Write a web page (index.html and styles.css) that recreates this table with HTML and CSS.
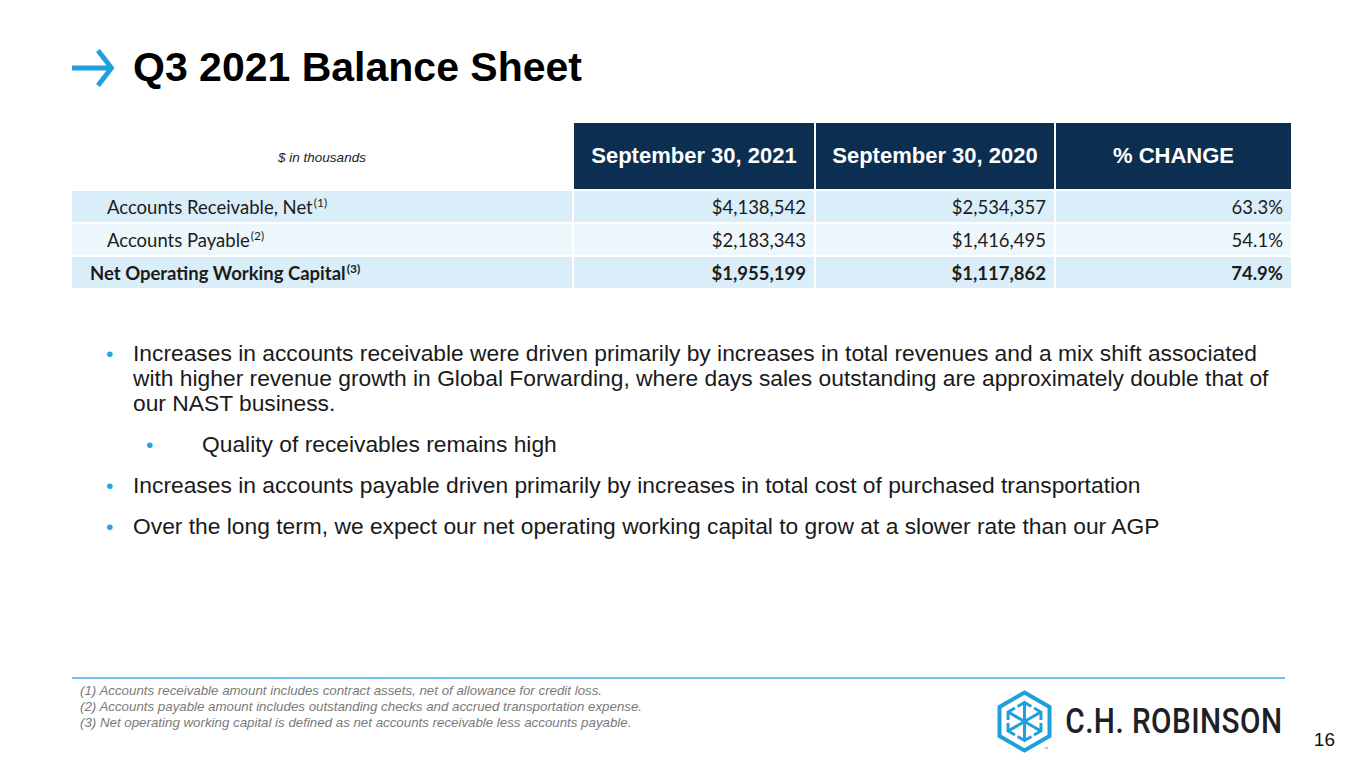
FILE: index.html
```html
<!DOCTYPE html>
<html lang="en">
<head>
<meta charset="utf-8">
<title>Q3 2021 Balance Sheet</title>
<link rel="stylesheet" href="styles.css">
</head>
<body>
<div class="slide">
  <header class="title-row">
    <svg class="title-arrow" width="42" height="38" viewBox="0 0 42 38" aria-hidden="true">
      <path d="M0 19 H38" />
      <path d="M26 1.5 L39.5 19 L26 36.5" />
    </svg>
    <h1 class="title">Q3 2021 Balance Sheet</h1>
  </header>

  <div class="table">
    <div class="cell head-note">$ in thousands</div>
    <div class="cell head">September 30, 2021</div>
    <div class="cell head">September 30, 2020</div>
    <div class="cell head">% CHANGE</div>

    <div class="cell label row-a">Accounts Receivable, Net<sup>(1)</sup></div>
    <div class="cell num row-a">$4,138,542</div>
    <div class="cell num row-a">$2,534,357</div>
    <div class="cell num row-a">63.3%</div>

    <div class="cell label row-b">Accounts Payable<sup>(2)</sup></div>
    <div class="cell num row-b">$2,183,343</div>
    <div class="cell num row-b">$1,416,495</div>
    <div class="cell num row-b">54.1%</div>

    <div class="cell label total row-a">Net Operating Working Capital<sup>(3)</sup></div>
    <div class="cell num total row-a">$1,955,199</div>
    <div class="cell num total row-a">$1,117,862</div>
    <div class="cell num total row-a">74.9%</div>
  </div>

  <ul class="bullets">
    <li class="item"><span class="dot">•</span><span class="text">Increases in accounts receivable were driven primarily by increases in total revenues and a mix shift associated with higher revenue growth in Global Forwarding, where days sales outstanding are approximately double that of our NAST business.</span></li>
    <li class="item sub"><span class="dot">•</span><span class="text">Quality of receivables remains high</span></li>
    <li class="item"><span class="dot">•</span><span class="text">Increases in accounts payable driven primarily by increases in total cost of purchased transportation</span></li>
    <li class="item"><span class="dot">•</span><span class="text">Over the long term, we expect our net operating working capital to grow at a slower rate than our AGP</span></li>
  </ul>

  <footer class="footer">
    <div class="rule"></div>
    <div class="footer-row">
      <div class="notes">
        <p>(1) Accounts receivable amount includes contract assets, net of allowance for credit loss.</p>
        <p>(2) Accounts payable amount includes outstanding checks and accrued transportation expense.</p>
        <p>(3) Net operating working capital is defined as net accounts receivable less accounts payable.</p>
      </div>
      <div class="brand">
        <svg class="brand-icon" width="55" height="63" viewBox="0 0 55 63" aria-hidden="true">
          <path class="hex" d="M27.5 2.5 L52.5 17 L52.5 46 L27.5 60.5 L2.5 46 L2.5 17 Z" />
          <g class="arrows">
            <path d="M27.5 31.5 L27.5 13.5 M27.5 31.5 L27.5 49.5 M27.5 31.5 L12 22.5 M27.5 31.5 L43 22.5 M27.5 31.5 L12 40.5 M27.5 31.5 L43 40.5" />
            <path d="M20.6 16.5 L27.5 12.5 L34.4 16.5" />
            <path d="M37 18 L43.95 22 L43.95 30" />
            <path d="M43.95 33 L43.95 41 L37 45" />
            <path d="M34.4 46.5 L27.5 50.5 L20.6 46.5" />
            <path d="M18 45 L11.05 41 L11.05 33" />
            <path d="M11.05 30 L11.05 22 L18 18" />
          </g>
          <text class="tm" x="47" y="60">™</text>
        </svg>
        <span class="brand-name">C.H. ROBINSON</span>
      </div>
      <div class="page-num">16</div>
    </div>
  </footer>
</div>
</body>
</html>
```

FILE: styles.css
```css
* { box-sizing: border-box; }

html, body {
  margin: 0;
  padding: 0;
  background: #ffffff;
}

.slide {
  width: 1365px;
  height: 768px;
  display: flex;
  flex-direction: column;
  background: #ffffff;
  font-family: "Liberation Sans", Arial, sans-serif;
  color: #1a1a1a;
  overflow: hidden;
}

/* Title */
.title-row {
  margin: 47px 0 0 72px;
  display: flex;
  align-items: center;
  gap: 19px;
}

.title-arrow path {
  fill: none;
  stroke: #1fa0dc;
  stroke-width: 5;
  stroke-linecap: butt;
  stroke-linejoin: miter;
}

.title {
  margin: 0;
  font-size: 41px;
  line-height: 41px;
  font-weight: 700;
  color: #000000;
}

/* Table */
.table {
  margin: 35px 0 0 72px;
  width: 1219px;
  display: grid;
  grid-template-columns: 500px 240px 238px 235px;
  grid-template-rows: 66px 31px 31px 31px;
  gap: 2px;
}

.cell {
  display: flex;
  align-items: center;
  white-space: nowrap;
}

.head-note {
  justify-content: center;
  font-style: italic;
  font-size: 13.5px;
  color: #1a1a1a;
  padding-top: 2px;
}

.head {
  justify-content: center;
  background: #0c2e51;
  color: #ffffff;
  font-weight: 700;
  font-size: 22px;
}

.label, .num {
  font-family: Lato, "Open Sans", sans-serif;
  font-size: 18.5px;
  color: #1c1c1c;
}

.label {
  padding-left: 35px;
}

.num {
  justify-content: flex-end;
  padding-right: 8px;
}

.total {
  font-weight: 700;
}

.label.total {
  padding-left: 18px;
}

.row-a { background: #d9eef9; }
.row-b { background: #edf7fc; }

.label sup {
  font-size: 12px;
  line-height: 1.2;
  align-self: flex-start;
  margin-top: 5px;
  margin-left: 1px;
}

/* Bullets */
.bullets {
  list-style: none;
  margin: 53px 0 0 106px;
  padding: 0;
  width: 1180px;
}

.item {
  display: flex;
  font-size: 22.8px;
  line-height: 25px;
  color: #1a1a1a;
  margin-bottom: 16px;
}

.item .dot {
  flex: 0 0 27px;
  color: #2aa2dc;
  font-size: 21px;
}

.item.sub {
  padding-left: 40px;
}

.item.sub .dot {
  flex-basis: 56px;
}

/* Footer */
.footer {
  margin-top: auto;
  height: 91px;
  padding-left: 72px;
}

.rule {
  width: 1213px;
  height: 2px;
  background: #6ec5ec;
}

.footer-row {
  display: flex;
  align-items: flex-start;
}

.notes {
  padding: 4px 0 0 8px;
  font-style: italic;
  font-size: 13.3px;
  line-height: 16px;
  color: #7a7a7a;
}

.notes p {
  margin: 0;
}

.brand {
  margin: 11px 0 0 auto;
  display: flex;
  align-items: center;
}

.brand-icon .hex {
  fill: none;
  stroke: #1fa0dc;
  stroke-width: 4;
  stroke-linejoin: miter;
}

.brand-icon .arrows path {
  fill: none;
  stroke: #1fa0dc;
  stroke-width: 3;
  stroke-linecap: butt;
  stroke-linejoin: miter;
}

.brand-icon .tm {
  font-size: 4px;
  fill: #555555;
  font-family: "Liberation Sans", Arial, sans-serif;
}

.brand-name {
  display: inline-block;
  margin-left: -25px;
  font-family: Roboto, "DejaVu Sans", sans-serif;
  font-weight: 500;
  font-size: 35px;
  letter-spacing: 0.5px;
  color: #1d2025;
  line-height: 1;
  transform: scaleX(0.85);
  transform-origin: right center;
}

.page-num {
  margin: 51px 30px 0 31px;
  font-size: 19px;
  line-height: 19px;
  color: #111111;
}
```
